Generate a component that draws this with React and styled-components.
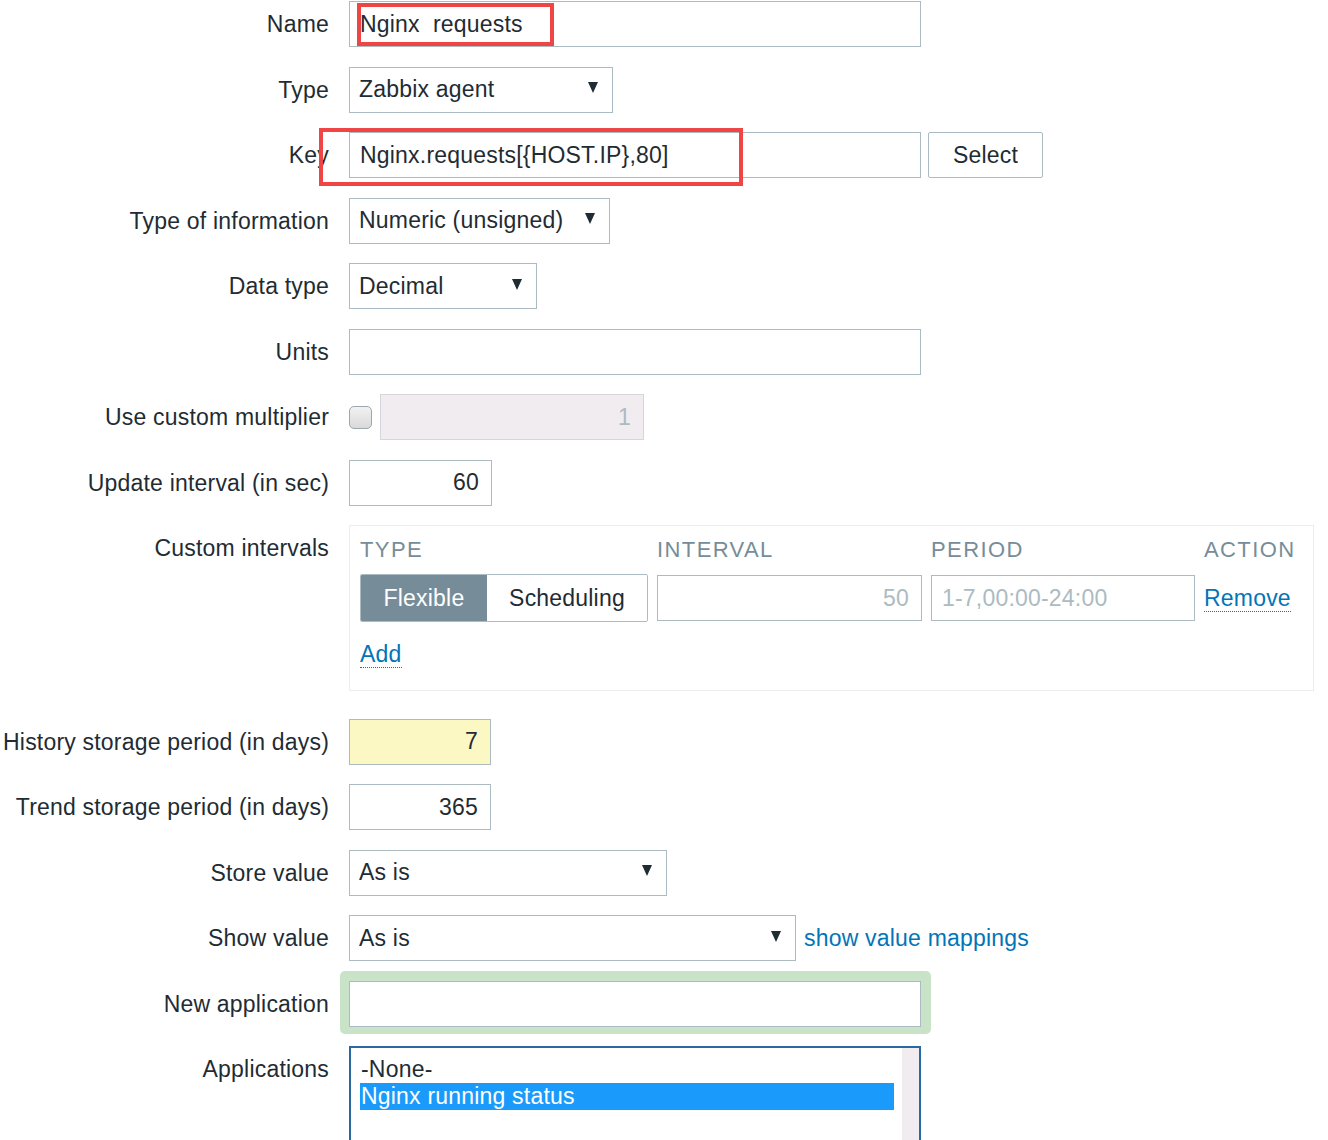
import React from "react";
import styled, { createGlobalStyle } from "styled-components";

const GlobalStyle = createGlobalStyle`
  html, body {
    margin: 0;
    padding: 0;
    background: #ffffff;
    overflow: hidden;
  }
  body {
    font-family: "Liberation Sans", Arial, sans-serif;
    font-size: 23px;
    letter-spacing: 0.2px;
    color: #1f2c33;
  }
`;

const Form = styled.div`
  display: grid;
  grid-template-columns: 329px 1fr;
  column-gap: 20px;
  row-gap: 19.5px;
  padding-top: 1px;
`;

const Label = styled.div`
  text-align: right;
  line-height: 46px;
  height: 46px;
  white-space: nowrap;
`;

const Field = styled.div`
  position: relative;
  display: flex;
  align-items: center;
  gap: ${({ gap }) => gap || 7}px;
  min-height: 46px;
`;

const TextInput = styled.input`
  box-sizing: border-box;
  width: ${({ w }) => w}px;
  height: 46px;
  margin: 0;
  padding: 0 ${({ right }) => (right ? 12 : 10)}px 0 10px;
  border: 1px solid #acbbc2;
  border-radius: 0;
  background: ${({ bg }) => bg || "#ffffff"};
  font: inherit;
  letter-spacing: inherit;
  color: #1f2c33;
  text-align: ${({ right }) => (right ? "right" : "left")};
  outline: none;
  &::placeholder {
    color: #acbbc2;
  }
  &:disabled {
    background: #f0ecf0;
    border-color: #d6d5dc;
    color: #acbbc2;
  }
`;

const SelectBox = styled.div`
  box-sizing: border-box;
  width: ${({ w }) => w}px;
  height: 46px;
  padding: 0 14px 0 9px;
  border: 1px solid #acbbc2;
  background: #ffffff;
  display: flex;
  align-items: center;
  justify-content: space-between;
  white-space: nowrap;
`;

const Arrow = styled.span`
  width: 0;
  height: 0;
  border-left: 5px solid transparent;
  border-right: 5px solid transparent;
  border-top: 11px solid #1f2c33;
  margin-bottom: 4px;
`;

const Button = styled.button`
  box-sizing: border-box;
  width: 115px;
  height: 46px;
  margin: 0;
  border: 1px solid #acbbc2;
  border-radius: 2px;
  background: #ffffff;
  font: inherit;
  letter-spacing: inherit;
  color: #1f2c33;
`;

const RedMark = styled.div`
  position: absolute;
  left: ${({ l }) => l}px;
  top: ${({ t }) => t}px;
  width: ${({ w }) => w}px;
  height: ${({ h }) => h}px;
  box-sizing: border-box;
  border: ${({ b }) => b}px solid #f04545;
  pointer-events: none;
`;

const Check = styled.span`
  box-sizing: border-box;
  width: 23px;
  height: 23px;
  border: 1px solid #9aa7ae;
  border-radius: 5px;
  background: linear-gradient(#f2f2f2, #d9d9d9);
`;

const IntervalBox = styled.div`
  box-sizing: border-box;
  width: 965px;
  margin-bottom: 8px;
  padding: 12px 10px 24px 10px;
  border: 1px solid #ebeef0;
  background: #ffffff;
`;

const IntervalGrid = styled.div`
  display: grid;
  grid-template-columns: 288px 265px 264px auto;
  column-gap: 9px;
  row-gap: 12px;
  align-items: center;
`;

const ColHead = styled.div`
  line-height: 24px;
  color: #768d99;
  text-transform: uppercase;
  letter-spacing: 1.4px;
  font-size: 22px;
`;

const Segmented = styled.div`
  box-sizing: border-box;
  height: 48px;
  display: flex;
  border: 1px solid #acbbc2;
  border-radius: 2px;
  overflow: hidden;
`;

const Segment = styled.div`
  width: ${({ w }) => w}px;
  flex: ${({ w }) => (w ? "none" : 1)};
  display: flex;
  align-items: center;
  justify-content: center;
  background: ${({ active }) => (active ? "#768d99" : "#ffffff")};
  color: ${({ active }) => (active ? "#ffffff" : "#1f2c33")};
`;

const Link = styled.a`
  color: #0275b8;
  text-decoration: none;
  cursor: pointer;
  border-bottom: ${({ dotted }) => (dotted ? "1px dotted #0275b8" : "none")};
  white-space: nowrap;
  line-height: 26px;
`;

const AddRow = styled.div`
  margin-top: 20px;
  height: 24px;
  display: flex;
  align-items: center;
`;

const NewAppHighlight = styled.div`
  margin: -10px 0 -7px -9px;
  padding: 10px 10px 7px 9px;
  background: #c8e3c8;
  border-radius: 5px;
  display: flex;
`;

const ListBox = styled.div`
  box-sizing: border-box;
  width: 572px;
  height: 120px;
  border: 2px solid #2769a0;
  border-bottom: none;
  display: flex;
  background: #ffffff;
`;

const Options = styled.div`
  flex: 1;
  padding: 8px 8px 0 9px;
`;

const Option = styled.div`
  height: 27px;
  line-height: 27px;
  padding-left: 1px;
  background: ${({ selected }) => (selected ? "#1a9bfb" : "transparent")};
  color: ${({ selected }) => (selected ? "#ffffff" : "#1f2c33")};
  white-space: nowrap;
`;

const ScrollTrack = styled.div`
  width: 17px;
  background: #f0ecf0;
`;

const Select = ({ w, children }) => (
  <SelectBox w={w}>
    <span>{children}</span>
    <Arrow />
  </SelectBox>
);

export default function App() {
  return (
    <>
      <GlobalStyle />
      <Form>
        <Label>Name</Label>
        <Field>
          <TextInput w={572} defaultValue="Nginx  requests" readOnly />
          <RedMark l={8} t={2} w={197} h={43} b={4} />
        </Field>

        <Label>Type</Label>
        <Field>
          <Select w={264}>Zabbix agent</Select>
        </Field>

        <Label>Key</Label>
        <Field>
          <TextInput w={572} defaultValue="Nginx.requests[{HOST.IP},80]" readOnly />
          <Button>Select</Button>
          <RedMark l={-30} t={-4} w={424} h={58} b={4} />
        </Field>

        <Label>Type of information</Label>
        <Field>
          <Select w={261}>Numeric (unsigned)</Select>
        </Field>

        <Label>Data type</Label>
        <Field>
          <Select w={188}>Decimal</Select>
        </Field>

        <Label>Units</Label>
        <Field>
          <TextInput w={572} readOnly />
        </Field>

        <Label>Use custom multiplier</Label>
        <Field gap={8}>
          <Check />
          <TextInput w={264} right defaultValue="1" disabled />
        </Field>

        <Label>Update interval (in sec)</Label>
        <Field>
          <TextInput w={143} right defaultValue="60" readOnly />
        </Field>

        <Label>Custom intervals</Label>
        <div>
          <IntervalBox>
            <IntervalGrid>
              <ColHead>Type</ColHead>
              <ColHead>Interval</ColHead>
              <ColHead>Period</ColHead>
              <ColHead>Action</ColHead>
              <Segmented>
                <Segment w={126} active>Flexible</Segment>
                <Segment>Scheduling</Segment>
              </Segmented>
              <TextInput w={265} right placeholder="50" readOnly />
              <TextInput w={264} placeholder="1-7,00:00-24:00" readOnly />
              <div>
                <Link dotted>Remove</Link>
              </div>
            </IntervalGrid>
            <AddRow>
              <Link dotted>Add</Link>
            </AddRow>
          </IntervalBox>
        </div>

        <Label>History storage period (in days)</Label>
        <Field>
          <TextInput w={142} right bg="#fbf8c4" defaultValue="7" readOnly />
        </Field>

        <Label>Trend storage period (in days)</Label>
        <Field>
          <TextInput w={142} right defaultValue="365" readOnly />
        </Field>

        <Label>Store value</Label>
        <Field>
          <Select w={318}>As is</Select>
        </Field>

        <Label>Show value</Label>
        <Field gap={8}>
          <Select w={447}>As is</Select>
          <Link>show value mappings</Link>
        </Field>

        <Label>New application</Label>
        <Field>
          <NewAppHighlight>
            <TextInput w={572} readOnly />
          </NewAppHighlight>
        </Field>

        <Label>Applications</Label>
        <Field>
          <ListBox>
            <Options>
              <Option>-None-</Option>
              <Option selected>Nginx running status</Option>
            </Options>
            <ScrollTrack />
          </ListBox>
        </Field>
      </Form>
    </>
  );
}
